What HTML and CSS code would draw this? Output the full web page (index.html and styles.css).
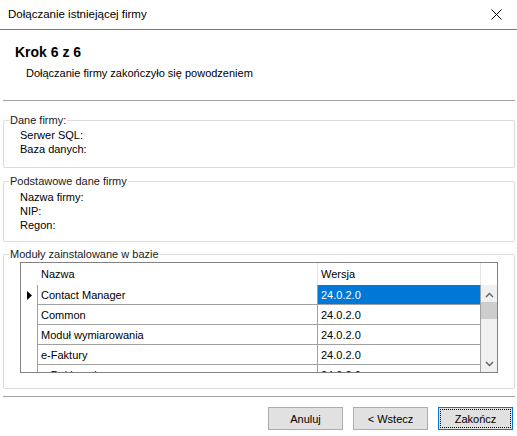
FILE: index.html
```html
<!DOCTYPE html>
<html lang="pl">
  <head>
    <meta charset="UTF-8" />
    <title>Dołączanie istniejącej firmy</title>
    <link rel="stylesheet" href="styles.css">
  </head>
  <body>
    <div class="dialog">
      <div class="titlebar">
        <span class="title">Dołączanie istniejącej firmy</span>
        <svg class="close" width="11" height="11" viewBox="0 0 11 11">
          <path d="M0.5 0.5 L10.5 10.5 M10.5 0.5 L0.5 10.5" stroke="#000" stroke-width="1" fill="none" />
        </svg>
      </div>

      <div class="step-header">
        <h1>Krok 6 z 6</h1>
        <p>Dołączanie firmy zakończyło się powodzeniem</p>
      </div>

      <div class="separator"></div>

      <div class="content">
        <fieldset class="group group-db">
          <legend>Dane firmy:</legend>
          <div class="field">Serwer SQL:</div>
          <div class="field">Baza danych:</div>
        </fieldset>

        <fieldset class="group group-company">
          <legend>Podstawowe dane firmy</legend>
          <div class="field">Nazwa firmy:</div>
          <div class="field">NIP:</div>
          <div class="field">Regon:</div>
        </fieldset>

        <fieldset class="group group-modules">
          <legend>Moduły zainstalowane w bazie</legend>
          <div class="grid">
            <div class="grid-head">
              <div class="row-head"></div>
              <div class="cell col-name">Nazwa</div>
              <div class="cell col-version">Wersja</div>
              <div class="head-filler"></div>
            </div>
            <div class="grid-body">
              <div class="rows">
                <div class="row current">
                  <div class="row-head">
                    <svg width="5" height="9" viewBox="0 0 5 9"><polygon points="0,0 5,4.5 0,9" fill="#000" /></svg>
                  </div>
                  <div class="cell col-name">Contact Manager</div>
                  <div class="cell col-version selected">24.0.2.0</div>
                </div>
                <div class="row">
                  <div class="row-head"></div>
                  <div class="cell col-name">Common</div>
                  <div class="cell col-version">24.0.2.0</div>
                </div>
                <div class="row">
                  <div class="row-head"></div>
                  <div class="cell col-name">Moduł wymiarowania</div>
                  <div class="cell col-version">24.0.2.0</div>
                </div>
                <div class="row">
                  <div class="row-head"></div>
                  <div class="cell col-name">e-Faktury</div>
                  <div class="cell col-version">24.0.2.0</div>
                </div>
                <div class="row">
                  <div class="row-head"></div>
                  <div class="cell col-name">e-Deklaracje</div>
                  <div class="cell col-version">24.0.2.0</div>
                </div>
              </div>
              <div class="scrollbar">
                <svg class="arrow" width="9" height="6" viewBox="0 0 9 6">
                  <path d="M1 5 L4.5 1.5 L8 5" stroke="#606060" stroke-width="1.4" fill="none" />
                </svg>
                <div class="track">
                  <div class="thumb"></div>
                </div>
                <svg class="arrow" width="9" height="6" viewBox="0 0 9 6">
                  <path d="M1 1 L4.5 4.5 L8 1" stroke="#606060" stroke-width="1.4" fill="none" />
                </svg>
              </div>
            </div>
          </div>
        </fieldset>
      </div>

      <div class="separator separator-bottom"></div>

      <div class="buttons">
        <button class="btn">Anuluj</button>
        <button class="btn">&lt; Wstecz</button>
        <button class="btn btn-default">Zakończ</button>
      </div>
    </div>
  </body>
</html>
```

FILE: styles.css
```css
* {
  margin: 0;
  padding: 0;
  box-sizing: border-box;
}

body {
  background: #fff;
  font-family: "Liberation Sans", Arial, sans-serif;
  font-size: 11px;
  color: #000;
}

.dialog {
  width: 517px;
  height: 436px;
  background: #fff;
  overflow: hidden;
}

/* window caption */
.titlebar {
  height: 30px;
  border-bottom: 1px solid #7a7a7a;
  display: flex;
  align-items: center;
  justify-content: space-between;
  padding: 0 15px 1px 8px;
}

.title {
  font-size: 11.5px;
}

/* step header */
.step-header {
  height: 70px;
  padding: 14px 0 0 15px;
}

.step-header h1 {
  font-size: 14px;
  font-weight: bold;
  line-height: 16px;
}

.step-header p {
  font-size: 11px;
  line-height: 15px;
  margin: 6px 0 0 11px;
}

.separator {
  margin: 0 2px 0 3px;
  border-top: 1px solid #a0a0a0;
}

.separator-bottom {
  margin-top: 7px;
}

.content {
  margin: 0 2px 0 3px;
}

/* group boxes */
.group {
  border: 1px solid #dcdcdc;
  border-radius: 2px;
  min-inline-size: 0;
}

.group legend {
  margin-left: 5px;
  padding: 0 1px;
  line-height: 14px;
  color: #1a1a1a;
}

.field {
  line-height: 14px;
  padding-left: 16px;
}

.group-db {
  margin-top: 12px;
  padding: 1px 0 11px 0;
}

.group-company {
  margin-top: 6px;
  padding: 2px 0 9px 0;
}

.group-modules {
  margin-top: 5px;
  padding: 1px 0 15px 0;
}

/* modules grid */
.grid {
  height: 111px;
  margin: 0 16px;
  border: 1px solid #828282;
  display: flex;
  flex-direction: column;
}

.grid-head {
  height: 22px;
  display: flex;
  flex-shrink: 0;
}

.grid-head .cell {
  border-right: 1px solid #e5e5e5;
}

.row-head {
  width: 17px;
  flex-shrink: 0;
  display: flex;
  align-items: center;
  padding-left: 6px;
}

.cell {
  display: flex;
  align-items: center;
  padding-left: 3px;
  white-space: nowrap;
  overflow: hidden;
}

.col-name {
  width: 280px;
}

.col-version {
  width: 163px;
}

.head-filler {
  flex: 1;
}

.grid-body {
  flex: 1;
  display: flex;
  overflow: hidden;
}

.rows {
  flex: 1;
  overflow: hidden;
}

.row {
  height: 20px;
  display: flex;
}

.row .row-head {
  border-right: 1px solid #a0a0a0;
}

.row .cell {
  border-right: 1px solid #a0a0a0;
  border-bottom: 1px solid #a0a0a0;
}

.cell.selected {
  background: #0078d7;
  color: #fff;
}

.scrollbar {
  width: 16px;
  flex-shrink: 0;
  background: #f0f0f0;
  display: flex;
  flex-direction: column;
  align-items: center;
}

.scrollbar .arrow {
  margin: 7px 0 4px;
  flex-shrink: 0;
}

.scrollbar .arrow:last-child {
  margin: 4px 0 5px;
}

.track {
  flex: 1;
  width: 100%;
}

.thumb {
  height: 17px;
  background: #cdcdcd;
}

/* dialog buttons */
.buttons {
  display: flex;
  justify-content: flex-end;
  gap: 10px;
  padding: 10px 4px 0 0;
}

.btn {
  width: 75px;
  height: 23px;
  background: #e1e1e1;
  border: 1px solid #adadad;
  font-family: "Liberation Sans", Arial, sans-serif;
  font-size: 11px;
  color: #000;
}

.btn-default {
  border-color: #0078d7;
  outline: 1px dotted #000;
  outline-offset: -3px;
}
```
